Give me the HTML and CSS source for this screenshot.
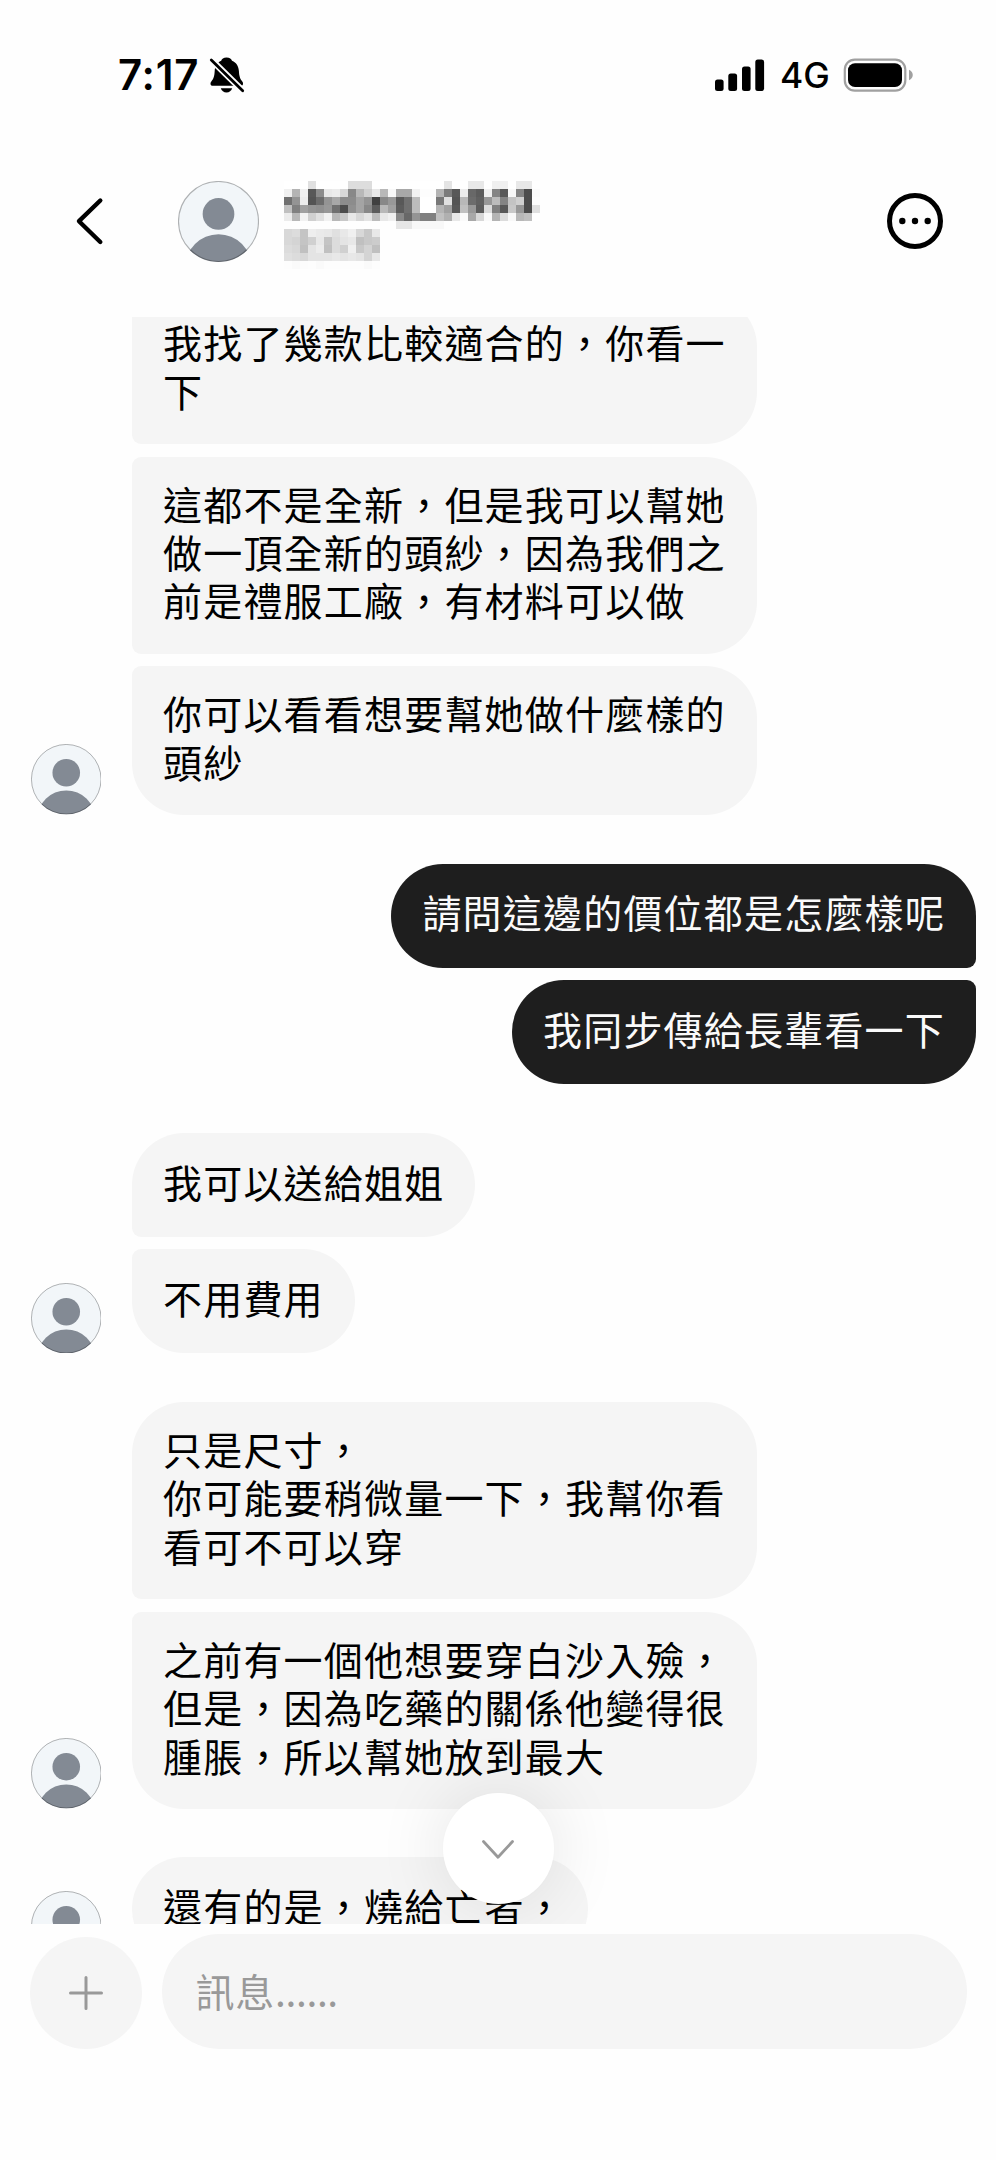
FILE: index.html
```html
<!DOCTYPE html>
<html lang="zh-Hant">
<head>
<meta charset="utf-8">
<title>訊息</title>
<link rel="stylesheet" href="styles.css">
</head>
<body>
<svg class="defs" width="0" height="0">
  <defs>
    <clipPath id="face"><circle cx="35.25" cy="35.25" r="35.25"/></clipPath>
    <symbol id="person" viewBox="0 0 70.5 70.5">
      <g clip-path="url(#face)">
        <rect width="70.5" height="70.5" fill="#f2f6f9"/>
        <circle cx="35.25" cy="28.7" r="13.8" fill="#838a94"/>
        <circle cx="35.25" cy="75.3" r="28.9" fill="#838a94"/>
      </g>
      <circle cx="35.25" cy="35.25" r="34.8" fill="none" stroke="#000" stroke-opacity=".28" stroke-width="1"/>
    </symbol>
  </defs>
</svg>
<div class="phone">
  <div class="status">
    <div class="status-left">
      <span class="clock">7:17</span>
      <svg class="bell" viewBox="0 0 36 38" width="36" height="38">
        <path d="M17.5 1.5c3.200 0 5 1.500 5.500 3.300 4.500 1.800 6.600 5.600 6.900 10.200.3 5.600 1.300 7.900 3.200 10.200 1.700 2.100 1.200 4.600-1.500 4.600H4c-2.700 0-3.200-2.500-1.500-4.600C4.500 22.900 5.400 20.600 5.700 15 6 10.400 7.900 6.600 12.200 4.800 12.700 3 14.500 1.500 17.500 1.500z"/>
        <path d="M11.800 32.300h11.400c-.8 2.700-2.900 4.200-5.700 4.200s-4.900-1.500-5.700-4.200z"/>
        <path d="M1 2.500 34 35" stroke="#fefefe" stroke-width="6.500"/>
        <path d="M2.300 4 33.700 34.700" stroke="#000" stroke-width="2.800" stroke-linecap="round"/>
      </svg>
    </div>
    <div class="status-right">
      <svg viewBox="0 0 50 34" width="50" height="34">
        <rect x="0" y="21.500" width="8.600" height="11.500" rx="2.500"/>
        <rect x="13.300" y="15.500" width="8.800" height="17.500" rx="2.500"/>
        <rect x="27" y="8.500" width="8.600" height="24.500" rx="2.500"/>
        <rect x="40.300" y="1.500" width="8.800" height="31.500" rx="2.500"/>
      </svg>
      <span class="network">4G</span>
      <svg viewBox="0 0 71 34" width="71" height="34">
        <rect x="1.800" y="1.600" width="60.500" height="31" rx="10" fill="none" stroke="#a0a0a0" stroke-width="2.200"/>
        <rect x="5" y="5.300" width="54" height="23.700" rx="7"/>
        <path d="M66 11.800c5 2 5 8.400 0 10.400z" fill="#a0a0a0"/>
      </svg>
    </div>
  </div>

  <header class="header">
    <svg class="back" viewBox="0 0 30 50" width="30" height="50"><path d="M25.300 4.500 4 25.200 25.300 46" fill="none" stroke="#000" stroke-width="4.400" stroke-linecap="round" stroke-linejoin="round"/></svg>
    <svg class="avatar-lg"><use href="#person"/></svg>
    <svg class="mosaic" id="mosaic" viewBox="0 0 32 11" width="256" height="88" shape-rendering="crispEdges"></svg>
    <svg class="more" viewBox="0 0 56 56" width="56" height="56"><circle cx="28" cy="28" r="25.500" fill="none" stroke="#000" stroke-width="5"/><circle cx="15.300" cy="28" r="3.200"/><circle cx="28" cy="28" r="3.200"/><circle cx="40.700" cy="28" r="3.200"/></svg>
  </header>

  <main class="chat">
    <section class="group received first">
      <div class="stack">
        <div class="bubble mid">我找了幾款比較適合的，你看一<br>下</div>
        <div class="bubble mid">這都不是全新，但是我可以幫她<br>做一頂全新的頭紗，因為我們之<br>前是禮服工廠，有材料可以做</div>
        <div class="bubble end">你可以看看想要幫她做什麼樣的<br>頭紗</div>
      </div>
      <svg class="avatar"><use href="#person"/></svg>
    </section>
    <section class="group sent">
      <div class="stack">
        <div class="bubble start">請問這邊的價位都是怎麼樣呢</div>
        <div class="bubble end">我同步傳給長輩看一下</div>
      </div>
    </section>
    <section class="group received">
      <div class="stack">
        <div class="bubble start">我可以送給姐姐</div>
        <div class="bubble end">不用費用</div>
      </div>
      <svg class="avatar"><use href="#person"/></svg>
    </section>
    <section class="group received">
      <div class="stack">
        <div class="bubble start">只是尺寸，<br>你可能要稍微量一下，我幫你看<br>看可不可以穿</div>
        <div class="bubble end">之前有一個他想要穿白沙入殮，<br>但是，因為吃藥的關係他變得很<br>腫脹，所以幫她放到最大</div>
      </div>
      <svg class="avatar"><use href="#person"/></svg>
    </section>
    <section class="group received">
      <div class="stack">
        <div class="bubble hang">還有的是，燒給亡者，</div>
      </div>
      <svg class="avatar"><use href="#person"/></svg>
    </section>
    <div class="jump">
      <svg viewBox="0 0 36 24" width="36" height="24"><path d="M3.500 3.500 18 19.200 32.500 3.500" fill="none" stroke="#999" stroke-width="2.800" stroke-linecap="round" stroke-linejoin="round"/></svg>
    </div>
  </main>

  <footer class="composer">
    <div class="plus"><svg viewBox="0 0 36 36" width="36" height="36"><path d="M18 2.500v31M2.500 18h31" stroke="#999" stroke-width="3" stroke-linecap="round"/></svg></div>
    <div class="field">訊息<span class="dots">......</span></div>
  </footer>
</div>
<script src="mosaic.js"></script>
</body>
</html>
```

FILE: styles.css
```css
* { box-sizing: border-box; }

body {
  margin: 0;
  background: #fefefe;
  color: #000;
  font-family: "Noto Sans CJK TC", sans-serif;
}

.defs { position: absolute; }

.phone {
  width: 996px;
  height: 2160px;
  display: flex;
  flex-direction: column;
  overflow: hidden;
}

.status {
  height: 150px;
  padding: 54.5px 82px 0 118px;
  display: flex;
  justify-content: space-between;
  align-items: flex-start;
  font-family: Inter, sans-serif;
}

.status-left, .status-right { display: flex; align-items: center; height: 40px; }
.clock { width: 90px; font-size: 42px; font-weight: 600; line-height: 40px; letter-spacing: 0.8px; }
.bell { margin-left: 0.5px; }
.network { width: 48px; margin: 2px 15px 0 15px; font-size: 35.5px; font-weight: 500; line-height: 40px; }

.header {
  height: 167px;
  padding: 31px 53px 0 74.5px;
  display: flex;
  align-items: flex-start;
}

.back { margin-top: 15px; }
.avatar-lg { width: 81px; height: 81px; margin-left: 73px; }
.mosaic { margin-left: 25.5px; }
.more { margin: 12.3px 0 0 auto; }

.chat {
  position: relative;
  height: 1607px;
  overflow: hidden;
}

.group { display: flex; margin-bottom: 48.6px; }
.first { margin-top: -21.7px; }
.received { flex-direction: row-reverse; justify-content: flex-end; align-items: flex-end; padding-left: 30.5px; gap: 31px; }
.sent { justify-content: flex-end; padding-right: 20px; }
.avatar { width: 70.5px; height: 70.5px; flex: none; }

.stack { display: flex; flex-direction: column; align-items: flex-start; gap: 12.7px; }
.sent .stack { align-items: flex-end; }

.bubble {
  min-height: 104px;
  padding: 22px 31px 29.8px;
  display: flow-root;
  align-content: center;
  border-radius: 52px;
  background: #f5f5f5;
  font-size: 39px;
  line-height: 48.4px;
  letter-spacing: 1.2px;
  white-space: nowrap;
}

.sent .bubble { background: #1e1e1e; color: #fafafa; }
.received .mid { border-radius: 9px 52px 52px 9px; }
.received .start { border-bottom-left-radius: 9px; }
.received .end { border-top-left-radius: 9px; }
.sent .start { border-bottom-right-radius: 9px; }
.sent .end { border-top-right-radius: 9px; }
.hang { width: 456px; padding-right: 0; }

.jump {
  position: absolute;
  left: 442.5px;
  top: 1476px;
  width: 111px;
  height: 111px;
  display: flex;
  align-items: center;
  justify-content: center;
  border-radius: 50%;
  background: #fff;
  box-shadow: 0 0 72px rgba(0, 0, 0, .11);
}

.jump svg { margin-top: 3px; }

.composer { display: flex; align-items: flex-end; gap: 20px; height: 124.5px; padding: 0 29.5px 0 30px; }
.plus { width: 112px; height: 112px; display: flex; align-items: center; justify-content: center; border-radius: 50%; background: #f5f5f5; }
.field {
  flex: 1;
  height: 115px;
  padding-left: 33.5px;
  border-radius: 57.5px;
  background: #f5f5f5;
  color: #999;
  font-size: 39px;
  line-height: 113px;
  letter-spacing: 0.8px;
}
.dots { letter-spacing: -0.4px; }
```

FILE: mosaic.js
```js
// Grey levels of the censored name block, one hex pair per 8px cell.
const rows = [
  "ffffffe0ffffffffddddddffffffffffffffffffe4ffffe8e8fff0f0ffe8e8ff",
  "f0b4f0588ce8ecd888b8d0e8b8f8a8a8f2fdfdb47c58ec685cf08458f8844cfb",
  "7094ec546c94a88c8ca4944088985870bcffff78e054b86c6098bc84c4d04cfd",
  "c080a0949098704c90a4885cb8a05c70bcffffb4a058c0985cdc8058c8984ce0",
  "ecb8f2d0e0f2b8c8e8d8e4bce8f08868948080c0b0e8faa8d8fab4dcf8b8c0ff",
  "fefefefefefefefefefefefefefee6e6f8f8f8f8fefefefefefefefefefefefe",
  "d8dcc4eeeae8e0e8f0d8c8e8",
  "d8d4c4d0e8c4dce4e8c0c8cc",
  "dcd8c0e4ecc0dcd0f0c8d4c0",
  "e0dcd8e4e4e4e8e4e8e4d4e8",
  "fdfafcfdfafdfdfdfdfdfafd"
];

const svg = document.getElementById("mosaic");
rows.forEach((row, y) => {
  for (let x = 0; x < row.length / 2; x++) {
    const tone = row.slice(x * 2, x * 2 + 2);
    const cell = document.createElementNS("http://www.w3.org/2000/svg", "rect");
    cell.setAttribute("x", x);
    cell.setAttribute("y", y);
    cell.setAttribute("width", 1);
    cell.setAttribute("height", 1);
    cell.setAttribute("fill", "#" + tone + tone + tone);
    svg.appendChild(cell);
  }
});
```
